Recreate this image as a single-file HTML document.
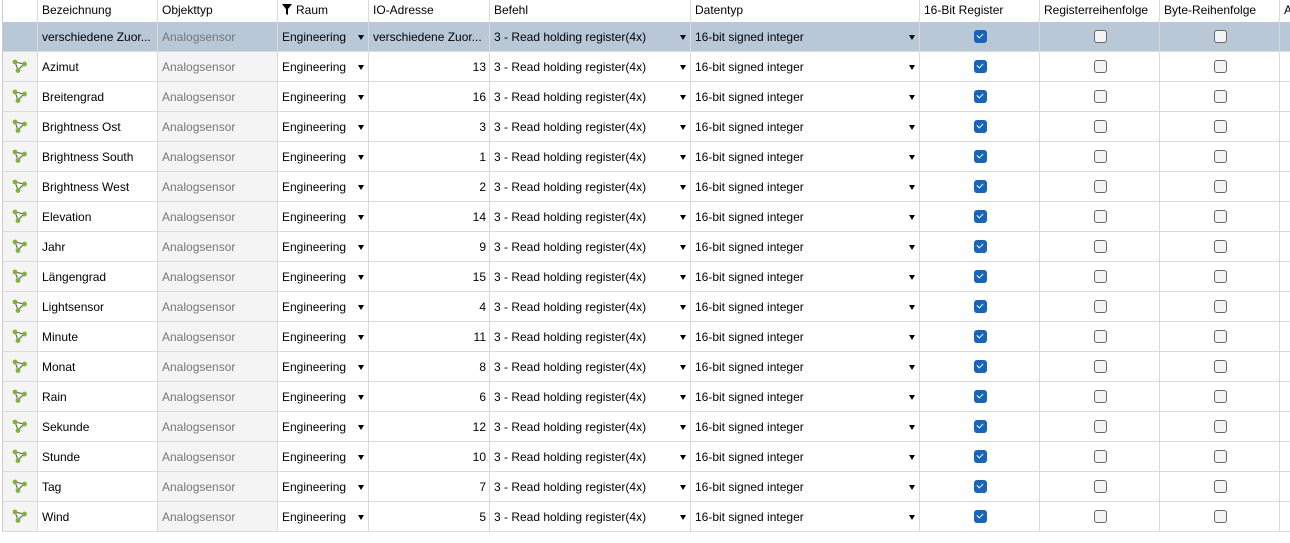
<!DOCTYPE html><html><head><style>
body{margin:0;width:1290px;height:543px;background:#fff;font-family:"Liberation Sans",sans-serif;font-size:12px;color:#000;overflow:hidden;position:relative}
.c{position:absolute;box-sizing:border-box;border-right:1px solid #dadada;border-bottom:1px solid #dadada;white-space:nowrap;overflow:hidden;line-height:29px;padding-left:4px;padding-top:1px}
.h{line-height:21px;border-bottom:none;padding-top:0}
.g{background:#f4f4f4}
.sel{background:#b9c8d7!important}
.ar{position:absolute;right:4px;top:13px;width:0;height:0;border-left:3.5px solid transparent;border-right:3.5px solid transparent;border-top:5px solid #000}
.cb{position:absolute;left:54px;top:8px;width:13px;height:13px;border-radius:3px;box-sizing:border-box}
.on{background:#1464c0}
.on:after{content:"";position:absolute;left:3px;top:3px;width:5px;height:3px;border-left:1px solid #fff;border-bottom:1px solid #fff;transform:rotate(-45deg)}
.off{border:1px solid #666;background:#f4f4f4}
.gr{color:#777}
</style></head><body>
<div id="t"></div>
<script>
const cols=[[2,38],[38,158],[158,278],[278,369],[369,490],[490,691],[691,920],[920,1040],[1040,1160],[1160,1280],[1280,1300]];
const heads=["","Bezeichnung","Objekttyp","RAUM","IO-Adresse","Befehl","Datentyp","16-Bit Register","Registerreihenfolge","Byte-Reihenfolge","A"];
const rows=[["verschiedene Zuor...",""],["Azimut",13],["Breitengrad",16],["Brightness Ost",3],["Brightness South",1],["Brightness West",2],["Elevation",14],["Jahr",9],["Längengrad",15],["Lightsensor",4],["Minute",11],["Monat",8],["Rain",6],["Sekunde",12],["Stunde",10],["Tag",7],["Wind",5]];
let h="";
cols.forEach((c,i)=>{let t=heads[i];if(t=="RAUM")t='<svg width="10" height="11" viewBox="0 0 10 11" style="vertical-align:-1px;margin-right:4px"><path d="M0 0H10L6 5V11L4 10V5Z" fill="#000"/></svg>Raum';
h+=`<div class="c h" style="left:${c[0]}px;top:0;width:${c[1]-c[0]}px;height:22px;${i==0?'border-left:1px solid #ccc':''}">${t}</div>`;});
const icon='<svg width="16" height="16" viewBox="0 0 16 16" style="position:absolute;left:9px;top:6px"><path d="M3 4 L12 6 L6 12 Z" fill="none" stroke="#555" stroke-width="1"/><circle cx="3" cy="4" r="2.4" fill="#7cb82f"/><circle cx="12.5" cy="6" r="2.4" fill="#7cb82f"/><circle cx="6" cy="12.5" r="2.4" fill="#7cb82f"/></svg>';
rows.forEach((r,k)=>{const y=22+k*30,s=k==0?' sel':'';
const cell=(i,cls,content,st='')=>{const c=cols[i];h+=`<div class="c${cls}${s}" style="left:${c[0]}px;top:${y}px;width:${c[1]-c[0]}px;height:30px;${i==0?'border-left:1px solid #ccc;':''}${st}">${content}</div>`;};
cell(0,' g',k?icon:'');
cell(1,'',r[0]);
cell(2,' g gr','Analogsensor');
cell(3,'','Engineering<span class="ar"></span>');
cell(4,'',k?r[1]:'verschiedene Zuor...',k?'text-align:right;padding-right:3px':'');
cell(5,'','3 - Read holding register(4x)<span class="ar"></span>');
cell(6,'','16-bit signed integer<span class="ar"></span>');
cell(7,'','<span class="cb on"></span>');
cell(8,'','<span class="cb off"></span>');
cell(9,'','<span class="cb off"></span>');
cell(10,'','');
});
document.getElementById('t').innerHTML=h;
</script>
</body></html>
